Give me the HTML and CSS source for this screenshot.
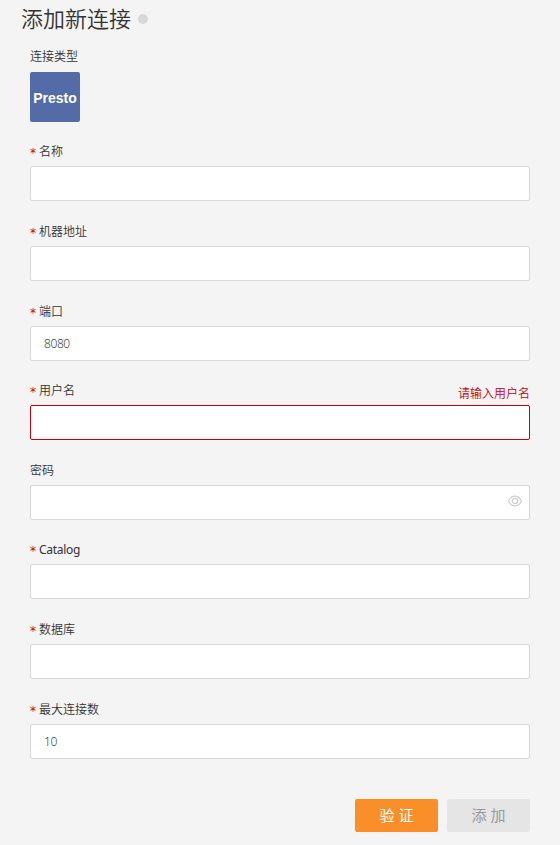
FILE: index.html
```html
<!DOCTYPE html>
<html lang="zh-CN">
<head>
<meta charset="utf-8">
<title>添加新连接</title>
<link rel="stylesheet" href="styles.css">
</head>
<body>
<main class="page">
  <header class="header">
    <h1 class="title">添加新连接</h1>
    <span class="status-dot"></span>
  </header>
  <form class="form">
    <div class="type">
      <div class="type-label">连接类型</div>
      <div class="type-tile">Presto</div>
    </div>
    <div class="field"><div class="label-row"><label class="label required">名称</label></div><div class="box"></div></div>
    <div class="field"><div class="label-row"><label class="label required">机器地址</label></div><div class="box"></div></div>
    <div class="field"><div class="label-row"><label class="label required">端口</label></div><div class="box"><span class="value">8080</span></div></div>
    <div class="field"><div class="label-row"><label class="label required">用户名</label><span class="error">请输入用户名</span></div><div class="box box-error"></div></div>
    <div class="field"><div class="label-row"><label class="label">密码</label></div><div class="box box-icon">
      <svg class="eye" viewBox="0 0 14 12" width="14" height="12"><path d="M.6 6C2 2.8 4.200 1.100 7 1.100S12 2.800 13.400 6C12 9.200 9.800 10.900 7 10.900S2 9.200.6 6z"/><circle cx="7" cy="6" r="2.600"/></svg>
    </div></div>
    <div class="field"><div class="label-row"><label class="label required latin">Catalog</label></div><div class="box"></div></div>
    <div class="field"><div class="label-row"><label class="label required">数据库</label></div><div class="box"></div></div>
    <div class="field"><div class="label-row"><label class="label required">最大连接数</label></div><div class="box"><span class="value">10</span></div></div>
    <div class="actions">
      <button type="button" class="btn btn-primary">验 证</button>
      <button type="button" class="btn btn-disabled" disabled>添 加</button>
    </div>
  </form>
</main>
</body>
</html>
```
FILE: styles.css
```css
* { box-sizing: border-box; }
body {
  margin: 0;
  background: #f4f4f4;
  color: #333;
  font: 350 12px/18px "Noto Sans", "Noto Sans CJK SC", sans-serif;
}
.page { height: 845px; overflow: hidden; }
.header {
  display: flex;
  align-items: center;
  height: 38px;
  padding-left: 21px;
}
.title {
  margin: 0;
  padding-bottom: 4px;
  font-family: "Noto Sans CJK SC", sans-serif;
  font-size: 22px;
  font-weight: 350;
  line-height: 34px;
}
.status-dot {
  width: 10px;
  height: 10px;
  margin-left: 7px;
  border-radius: 50%;
  background: #d8d8d8;
}
.form { padding: 0 30px; }
.type { height: 98.25px; padding-top: 10px; }
.type-label { height: 24px; }
.type-tile {
  display: flex;
  align-items: center;
  justify-content: center;
  width: 50px;
  height: 50px;
  padding-top: 2px;
  border-radius: 2px;
  background: #536ca8;
  color: #fff;
  font: bold 14px/20px "Liberation Sans", sans-serif;
}
.field { height: 79.65px; }
.label-row {
  display: flex;
  justify-content: space-between;
  height: 30px;
  line-height: 32px;
}
.required { display: flex; }
.required::before {
  content: "*";
  width: 9px;
  padding-top: 1px;
  color: #c7000b;
  font-family: "DejaVu Sans", sans-serif;
  font-size: 12px;
  font-weight: normal;
  letter-spacing: 0;
}
.latin { font-weight: 400; letter-spacing: -0.3px; }
.error { padding-top: 3px; color: #c7000b; }
.box {
  display: flex;
  align-items: center;
  height: 35px;
  padding: 0 14px;
  border: 1px solid #d9d9d9;
  border-radius: 2px;
  background: #fff;
}
.box-error { border-color: #c7000b; }
.box-icon { justify-content: flex-end; padding: 0 7px 3px; }
.eye { fill: none; stroke: #d0d0d0; stroke-width: 1.2; }
.value { padding-top: 2px; margin-left: -1px; color: #444; letter-spacing: -0.4px; }
.actions {
  display: flex;
  justify-content: flex-end;
  gap: 9px;
  padding-top: 25.5px;
}
.btn {
  width: 83px;
  height: 33px;
  padding: 0;
  border: 0;
  border-radius: 2px;
  font: 15px/33px "Noto Sans", "Noto Sans CJK SC", sans-serif;
}
.btn-primary { background: #fa8e29; color: #fff; }
.btn-disabled { background: #e5e5e5; color: #999; }
```
